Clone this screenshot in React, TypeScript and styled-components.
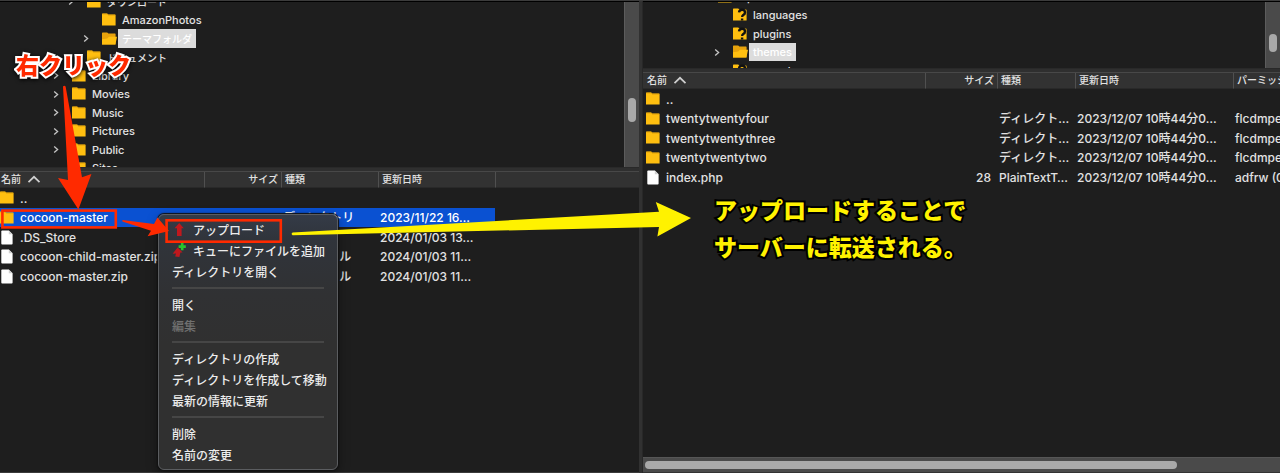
import React from "react";
import styled, { createGlobalStyle, css } from "styled-components";

const GlobalStyle = createGlobalStyle`
  *, *::before, *::after { box-sizing: border-box; }
  body {
    margin: 0;
    background: #1e1e1e;
    color: #e2e2e2;
    font-family: Inter, "Noto Sans CJK JP", sans-serif;
    font-weight: 500;
  }
`;

const Page = styled.main`
  position: relative;
  display: grid;
  grid-template-columns: calc(50% - 1px) 4px minmax(0, 1fr);
  min-height: 100vh;
  overflow: hidden;
  border-top: 1px solid #3c3c3c;
`;

const Pane = styled.section`
  display: flex;
  flex-direction: column;
  min-width: 0;
  overflow: hidden;
  border-top: 1px solid #000;
`;

const PaneDivider = styled.div`
  background: #313131;
  border-right: 1px solid #282828;
`;

const TreeArea = styled.div<{ $height: number }>`
  display: flex;
  flex: none;
  height: ${(p) => p.$height}px;
  overflow: hidden;
`;

const TreeList = styled.ul<{ $scrolled: number }>`
  flex: 1;
  min-width: 0;
  margin: -${(p) => p.$scrolled}px 0 0;
  padding: 0;
  list-style: none;
`;

const TreeRow = styled.li<{ $indent: number }>`
  display: flex;
  align-items: center;
  height: 18px;
  padding-left: ${(p) => p.$indent}px;
  font-size: 11px;
  &:nth-child(odd) { height: 19px; }
`;

const ChevronSlot = styled.span`
  display: flex;
  flex: none;
  width: 19px;
`;

const TreeLabel = styled.span<{ $selected?: boolean; $ja?: boolean }>`
  align-self: stretch;
  display: flex;
  align-items: center;
  margin-left: 2px;
  padding: 0 4px;
  white-space: nowrap;
  font-size: ${(p) => (p.$ja ? 10 : 11)}px;
  ${(p) => p.$selected && css`background: #dcdcdc; color: #fff;`}
`;

const VerticalTrack = styled.div`
  flex: none;
  width: 15px;
  padding-left: 3px;
  background: #4a4a4a;
  border-left: 1px solid #5c5c5c;
`;

const VerticalThumb = styled.div<{ $top: number; $length: number }>`
  width: 8px;
  height: ${(p) => p.$length}px;
  margin-top: ${(p) => p.$top}px;
  border-radius: 4px;
  background: #a9a9a9;
`;

const SplitBar = styled.div`
  flex: none;
  height: 5px;
  background: #2f2f2f;
  border-top: 1px solid #292929;
  border-bottom: 1px solid #484848;
`;

const FileTable = styled.table`
  width: 100%;
  table-layout: fixed;
  border-collapse: separate;
  border-spacing: 0;
`;

const HeadCell = styled.th<{ $right?: boolean }>`
  height: 16px;
  padding: 0 3px;
  overflow: hidden;
  background: #323232;
  border-left: 1px solid #505050;
  border-bottom: 1px solid #292929;
  font-size: 10px;
  font-weight: 500;
  line-height: 15px;
  text-align: ${(p) => (p.$right ? "right" : "left")};
  white-space: nowrap;
  &:first-child { border-left: 0; padding-left: 0; }
`;

const SortButton = styled.button<{ $pad: number }>`
  display: flex;
  align-items: center;
  gap: 6px;
  padding: 0 0 0 ${(p) => p.$pad}px;
  border: 0;
  background: none;
  color: inherit;
  font: inherit;
`;

const FileRow = styled.tr<{ $selected?: boolean }>`
  height: 20px;
  font-size: 12px;
  line-height: 19px;
  &:nth-child(even) { height: 19px; }
  td:not(:last-child) {
    ${(p) => p.$selected && css`background: #0a51d2; color: #fff;`}
  }
`;

const Cell = styled.td<{ $right?: boolean }>`
  padding: 0 ${(p) => (p.$right ? 6 : 0)}px 0 2px;
  overflow: hidden;
  text-align: ${(p) => (p.$right ? "right" : "left")};
  white-space: nowrap;
`;

const NameCell = styled(Cell)<{ $pad: number }>`
  padding: 0 0 0 ${(p) => p.$pad}px;
`;

const FileName = styled.span`
  display: flex;
  align-items: center;
  gap: 6px;
`;

const HorizontalTrack = styled.div`
  height: 16px;
  margin-top: auto;
  padding: 3px 2px;
  background: #4a4a4a;
  border-top: 1px solid #565656;
  border-bottom: 1px solid #333;
`;

const HorizontalThumb = styled.div`
  width: 84%;
  height: 8px;
  border-radius: 4px;
  background: #a9a9a9;
`;

const StatusEdge = styled.div`
  height: 1px;
  margin-top: auto;
  background: #3a3a3a;
`;

const ContextMenu = styled.div`
  position: absolute;
  top: 213px;
  left: 158px;
  width: 180px;
  padding: 4px 13px;
  border: 1px solid #5b5d60;
  border-radius: 6px;
  background: linear-gradient(#343b47 0, #30343b 24px, #303133 80px, #303030 130px);
  box-shadow: 0 0 1px 1px #111, 0 4px 12px rgba(0, 0, 0, 0.4);
`;

const MenuItem = styled.button`
  display: flex;
  align-items: center;
  gap: 6px;
  width: 100%;
  height: 21px;
  padding: 0;
  border: 0;
  background: none;
  color: #ececec;
  font-family: inherit;
  font-size: 12px;
  font-weight: 500;
  white-space: nowrap;
  &:disabled { color: #707070; }
`;

const MenuSeparator = styled.hr`
  height: 2px;
  margin: 5px 0;
  border: 0;
  background: #464646;
`;

const Annotations = styled.svg`
  position: absolute;
  top: -1px;
  left: 0;
  pointer-events: none;
`;

const Callout = styled.p<{ $top: number; $left: number; $kind: "red" | "yellow" }>`
  position: absolute;
  top: ${(p) => p.$top}px;
  left: ${(p) => p.$left}px;
  margin: 0;
  font-family: "Noto Sans CJK JP", sans-serif;
  font-size: 23px;
  font-weight: 900;
  line-height: 37px;
  white-space: nowrap;
  paint-order: stroke fill;
  ${(p) =>
    p.$kind === "red"
      ? css`
          color: #ff2a00;
          -webkit-text-stroke: 4px #fff;
          filter: drop-shadow(0 1px 2px #000);
        `
      : css`
          color: #fff200;
          -webkit-text-stroke: 4px #000;
        `}
`;

type FolderKind = "closed" | "open" | "unknown";

const IconSvg = styled.svg`
  flex: none;
  overflow: visible;
`;

function FolderIcon({ kind = "closed" }: { kind?: FolderKind }) {
  return (
    <IconSvg width="14" height="14" viewBox="0 0 14 14" aria-hidden="true">
      <path d="M0 1.2 Q0 .6 .6 .6 H5.2 L6.4 1.6 H13 Q13.6 1.6 13.6 2.2 V12.4 H0Z" fill={kind === "open" ? "#e8a30c" : "#ffbf10"} />
      {kind === "closed" && <path d="M.3 1 H5 L6.2 2.1 H13.2" stroke="#d99a08" strokeWidth=".7" fill="none" />}
      {kind === "open" && <path d="M0 12.6 V7.2 L5.2 6.4 L7 4.8 H15 L13.4 12.6Z" fill="#ffbf10" />}
      {kind === "unknown" && (
        <path d="M6 4.4 Q6.4 1.8 9 1.8 Q12 1.8 12 4.4 Q12 6 10.2 7 Q9.2 7.6 9.2 9 M9.1 10.4 V12.6" stroke="#111" strokeWidth="2.4" fill="none" />
      )}
    </IconSvg>
  );
}

function FileIcon() {
  return (
    <IconSvg width="14" height="15" viewBox="0 0 14 15" aria-hidden="true">
      <path d="M2.2 .5 H8.8 L12.6 4.2 V13.6 Q12.6 14.5 11.7 14.5 H2.2 Q1.3 14.5 1.3 13.6 V1.4 Q1.3 .5 2.2 .5Z" fill="#fff" />
      <path d="M8.8 .5 V4.2 H12.6" fill="#d0d0d0" />
    </IconSvg>
  );
}

function Chevron() {
  return (
    <svg width="7" height="9" viewBox="0 0 7 9" aria-hidden="true">
      <path d="M1.2 1.6 L4.6 4.5 L1.2 7.4" fill="none" stroke="#c6c6c6" strokeWidth="1.3" />
    </svg>
  );
}

function SortArrow() {
  return (
    <svg width="14" height="9" viewBox="0 0 14 9" aria-hidden="true">
      <path d="M1.5 7.2 L7 1.8 L12.5 7.2" fill="none" stroke="#cfcfcf" strokeWidth="1.7" />
    </svg>
  );
}

function UploadIcon({ queued = false }: { queued?: boolean }) {
  return (
    <IconSvg width="15" height="16" viewBox="0 0 15 16" aria-hidden="true">
      {queued ? (
        <>
          <path d="M5.6 4.4 L10.6 9.6 H8.4 L7.4 14 L3.2 13.4 L4 10.4 L.6 10.8Z" fill="#c0181d" />
          <path d="M10.2 0 V7.2 M6.6 3.6 H13.8" stroke="#27c52e" strokeWidth="2.6" />
        </>
      ) : (
        <path d="M7.2 1 L11.8 6.2 H9.6 V14 H5 V6.2 H2.6Z" fill="#c0181d" />
      )}
    </IconSvg>
  );
}

type TreeItem = { name: string; indent: number; open?: boolean; kind?: FolderKind; selected?: boolean; ja?: boolean };

const localTree: TreeItem[] = [
  { name: "ダウンロード", indent: 68, open: true, ja: true },
  { name: "AmazonPhotos", indent: 83 },
  { name: "テーマフォルダ", indent: 83, open: true, kind: "open", selected: true, ja: true },
  { name: "ドキュメント", indent: 68, ja: true },
  { name: "Library", indent: 53, open: true },
  { name: "Movies", indent: 53, open: true },
  { name: "Music", indent: 53, open: true },
  { name: "Pictures", indent: 53, open: true },
  { name: "Public", indent: 53, open: true },
  { name: "Sites", indent: 53 },
];

const remoteTree: TreeItem[] = [
  { name: "wp-content", indent: 56, open: true },
  { name: "languages", indent: 71, kind: "unknown" },
  { name: "plugins", indent: 71, kind: "unknown" },
  { name: "themes", indent: 71, open: true, kind: "open", selected: true },
  { name: "upgrade", indent: 71, kind: "unknown" },
];

type FileItem = { name: string; folder?: boolean; size?: string; kind?: string; date?: string; perm?: string; selected?: boolean };

const localFiles: FileItem[] = [
  { name: "..", folder: true },
  { name: "cocoon-master", folder: true, kind: "ディレクトリ", date: "2023/11/22 16…", selected: true },
  { name: ".DS_Store", kind: "ファイル", date: "2024/01/03 13…" },
  { name: "cocoon-child-master.zip", kind: "zip ファイル", date: "2024/01/03 11…" },
  { name: "cocoon-master.zip", kind: "zip ファイル", date: "2024/01/03 11…" },
];

const remoteDate = "2023/12/07 10時44分0…";
const remoteFiles: FileItem[] = [
  { name: "..", folder: true },
  { name: "twentytwentyfour", folder: true, kind: "ディレクト…", date: remoteDate, perm: "flcdmpe (0755)" },
  { name: "twentytwentythree", folder: true, kind: "ディレクト…", date: remoteDate, perm: "flcdmpe (0755)" },
  { name: "twentytwentytwo", folder: true, kind: "ディレクト…", date: remoteDate, perm: "flcdmpe (0755)" },
  { name: "index.php", size: "28", kind: "PlainTextT…", date: remoteDate, perm: "adfrw (0644)" },
];

type TreeProps = { items: TreeItem[]; height: number; scrolled: number; thumbTop: number; thumbLength: number };

function Tree({ items, height, scrolled, thumbTop, thumbLength }: TreeProps) {
  return (
    <TreeArea $height={height}>
      <TreeList $scrolled={scrolled}>
        {items.map((item) => (
          <TreeRow key={item.name} $indent={item.indent}>
            <ChevronSlot>{item.open && <Chevron />}</ChevronSlot>
            <FolderIcon kind={item.kind} />
            <TreeLabel $selected={item.selected} $ja={item.ja}>{item.name}</TreeLabel>
          </TreeRow>
        ))}
      </TreeList>
      <VerticalTrack>
        <VerticalThumb $top={thumbTop} $length={thumbLength} />
      </VerticalTrack>
    </TreeArea>
  );
}

type FilesProps = { items: FileItem[]; widths: number[]; lastHeading: string; pad: number };

function Files({ items, widths, lastHeading, pad }: FilesProps) {
  return (
    <FileTable>
      <colgroup>
        {widths.map((width, i) => <col key={i} width={width} />)}
        <col />
      </colgroup>
      <thead>
        <tr>
          <HeadCell>
            <SortButton type="button" $pad={pad + 1}>名前 <SortArrow /></SortButton>
          </HeadCell>
          <HeadCell $right>サイズ</HeadCell>
          <HeadCell>種類</HeadCell>
          <HeadCell>更新日時</HeadCell>
          <HeadCell>{lastHeading}</HeadCell>
        </tr>
      </thead>
      <tbody>
        {items.map((item) => (
          <FileRow key={item.name} $selected={item.selected}>
            <NameCell $pad={pad}>
              <FileName>
                {item.folder ? <FolderIcon /> : <FileIcon />}
                {item.name}
              </FileName>
            </NameCell>
            <Cell $right>{item.size}</Cell>
            <Cell>{item.kind}</Cell>
            <Cell>{item.date}</Cell>
            <Cell>{item.perm}</Cell>
          </FileRow>
        ))}
      </tbody>
    </FileTable>
  );
}

export default function App() {
  return (
    <>
      <GlobalStyle />
      <Page>
        <Pane>
          <Tree items={localTree} height={165} scrolled={10} thumbTop={96} thumbLength={24} />
          <SplitBar />
          <Files items={localFiles} widths={[204, 77, 97, 117]} lastHeading="" pad={0} />
          <StatusEdge />
        </Pane>
        <PaneDivider />
        <Pane>
          <Tree items={remoteTree} height={66} scrolled={15} thumbTop={32} thumbLength={18} />
          <SplitBar />
          <Files items={remoteFiles} widths={[282, 72, 78, 158]} lastHeading="パーミッション" pad={3} />
          <HorizontalTrack>
            <HorizontalThumb />
          </HorizontalTrack>
        </Pane>

        <ContextMenu>
          <MenuItem type="button"><UploadIcon />アップロード</MenuItem>
          <MenuItem type="button"><UploadIcon queued />キューにファイルを追加</MenuItem>
          <MenuItem type="button">ディレクトリを開く</MenuItem>
          <MenuSeparator />
          <MenuItem type="button">開く</MenuItem>
          <MenuItem type="button" disabled>編集</MenuItem>
          <MenuSeparator />
          <MenuItem type="button">ディレクトリの作成</MenuItem>
          <MenuItem type="button">ディレクトリを作成して移動</MenuItem>
          <MenuItem type="button">最新の情報に更新</MenuItem>
          <MenuSeparator />
          <MenuItem type="button">削除</MenuItem>
          <MenuItem type="button">名前の変更</MenuItem>
        </ContextMenu>

        <Annotations width="1280" height="473" viewBox="0 0 1280 473" aria-hidden="true">
          <g fill="none" stroke="#ff2a00" strokeWidth="2.6">
            <rect x="2.4" y="210.6" width="113.4" height="16.8" />
            <rect x="166.6" y="220.3" width="114.2" height="21.4" />
          </g>
          <g fill="#ff2a00">
            <path d="M63 86.4 Q64.4 85 65.6 86.4 L82 177.3 L91.4 174 L78.4 209.5 L58 178 L68 180Z" />
            <path d="M122.4 220 L154 224 L157.4 217.6 L169 231 L147.6 236.2 L151 230.7 L122.4 221.6Z" />
          </g>
          <path d="M292.6 232.4 L659 211.8 L655.8 202 L691 218 L657.4 236.4 L659 227 L292.6 235.2 Q290.6 233.8 292.6 232.4Z" fill="#fff200" />
        </Annotations>

        <Callout $kind="red" $top={45} $left={16}>右クリック</Callout>
        <Callout $kind="yellow" $top={190} $left={714}>
          アップロードすることで<br />サーバーに転送される。
        </Callout>
      </Page>
    </>
  );
}
